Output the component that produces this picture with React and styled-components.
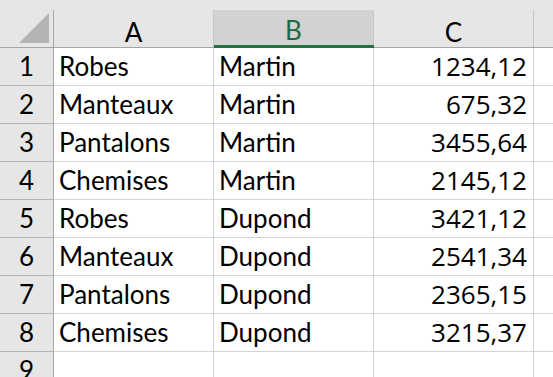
import React from "react";
import styled, { createGlobalStyle } from "styled-components";

const Global = createGlobalStyle`
  html, body { margin: 0; padding: 0; background: #ffffff; }
  body { font-family: Lato, "Liberation Sans", sans-serif; overflow: hidden; }
`;

const Sheet = styled.div`
  display: grid;
  grid-template-columns: 54px 160px 160px 160px 1fr;
  grid-auto-rows: 38px;
  grid-template-rows: 48px;
  width: 553px;
  height: 377px;
  overflow: hidden;
  background: #ffffff;
  font-family: Lato, "Liberation Sans", sans-serif;
`;

const Corner = styled.div`
  background: #e6e6e6;
  border-bottom: 1px solid #a6a6a6;
  padding-top: 10px;
  display: flex;
`;

const CornerInner = styled.div`
  flex: 1;
  border-right: 1px solid #a6a6a6;
  display: flex;
  align-items: flex-end;
  justify-content: flex-end;
  padding: 0 3px 3px 0;
`;

const ColHeader = styled.div`
  background: #e6e6e6;
  padding-top: 10px;
  display: flex;
  border-bottom: ${(p) => (p.$selected ? "3px solid #217346" : "1px solid #a6a6a6")};
`;

const ColLabel = styled.div`
  flex: 1;
  display: flex;
  align-items: center;
  justify-content: center;
  padding-top: ${(p) => (p.$selected ? "4px" : "6px")};
  font-size: 26px;
  color: ${(p) => (p.$selected ? "#1e6b3f" : "#000000")};
  background: ${(p) => (p.$selected ? "#d2d2d2" : "transparent")};
  border-right: 1px solid ${(p) => (p.$last ? "transparent" : "#c4c4c4")};
`;

const RowHeader = styled.div`
  background: #e6e6e6;
  border-right: 1px solid #a6a6a6;
  border-bottom: 1px solid #b4b4b4;
  display: flex;
  align-items: center;
  justify-content: center;
  font-size: 26px;
  line-height: 37px;
  color: #000;
`;

const Cell = styled.div`
  border-right: 1px solid #d4d4d4;
  border-bottom: 1px solid #d4d4d4;
  padding: 0 6px 0 5px;
  font-size: 26px;
  line-height: 37px;
  color: #000;
  white-space: nowrap;
  overflow: hidden;
  text-align: left;
`;

const NumCell = styled(Cell)`
  font-family: "Open Sans", Lato, sans-serif;
  font-size: 26px;
  text-align: right;
`;

const Filler = styled.div`
  border-bottom: 1px solid #d4d4d4;
`;

const data = [
  ["Robes", "Martin", "1234,12"],
  ["Manteaux", "Martin", "675,32"],
  ["Pantalons", "Martin", "3455,64"],
  ["Chemises", "Martin", "2145,12"],
  ["Robes", "Dupond", "3421,12"],
  ["Manteaux", "Dupond", "2541,34"],
  ["Pantalons", "Dupond", "2365,15"],
  ["Chemises", "Dupond", "3215,37"],
  ["", "", ""],
];

export default function App() {
  return (
    <>
      <Global />
      <Sheet>
        <Corner>
          <CornerInner>
            <svg width="31" height="31" viewBox="0 0 31 31">
              <polygon points="0,30 30,30 30,0" fill="#b4b4b4" />
            </svg>
          </CornerInner>
        </Corner>
        <ColHeader><ColLabel>A</ColLabel></ColHeader>
        <ColHeader $selected><ColLabel $selected>B</ColLabel></ColHeader>
        <ColHeader><ColLabel>C</ColLabel></ColHeader>
        <ColHeader><ColLabel $last></ColLabel></ColHeader>
        {data.map((row, i) => (
          <React.Fragment key={i}>
            <RowHeader>{i + 1}</RowHeader>
            <Cell>{row[0]}</Cell>
            <Cell>{row[1]}</Cell>
            <NumCell>{row[2]}</NumCell>
            <Filler />
          </React.Fragment>
        ))}
      </Sheet>
    </>
  );
}
